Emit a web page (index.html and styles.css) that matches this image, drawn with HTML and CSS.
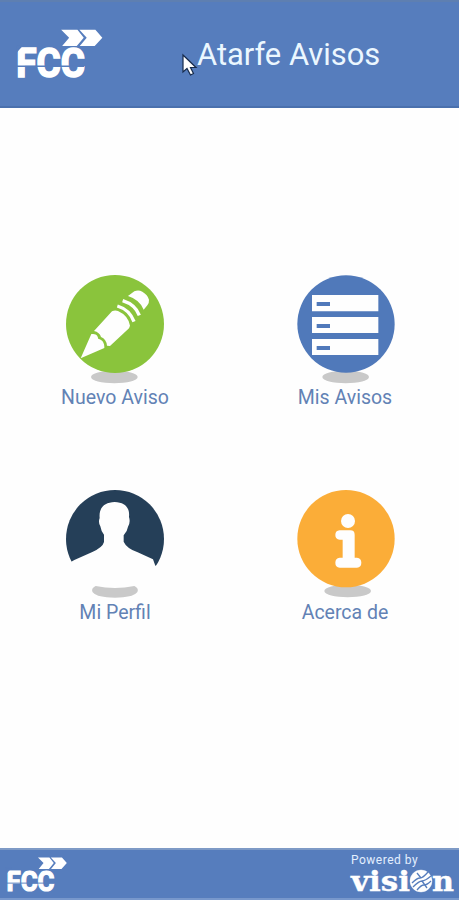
FILE: index.html
```html
<!DOCTYPE html>
<html lang="es">
<head>
    <meta charset="UTF-8">
    <meta name="viewport" content="width=device-width, initial-scale=1.0">
    <title>Atarfe Avisos</title>
    <link rel="stylesheet" href="styles.css">
</head>
<body>
    <div class="container">
        <header class="header">
            <svg class="header-logo" viewBox="50 84 262 156">
                <text class="logo-text" x="48" y="232" textLength="206" lengthAdjust="spacingAndGlyphs">FCC</text>
                <path class="logo-cut" d="M50 199H252M46 134V158L68 134Z"/>
                <path class="logo-arrow" d="M183 89H232L251 113L230 138H186L207 113ZM238 89H286L307 113L284 138H239L260 113Z"/>
            </svg>
            <h1>Atarfe Avisos</h1>
            <svg class="cursor" viewBox="0 0 15 22">
                <path d="M1 1V18L5 14.500L8.500 21L11.500 19.500L8.500 13.500H14Z"/>
            </svg>
        </header>

        <main class="menu">
            <a class="menu-item">
                <svg viewBox="0 0 390 345">
                    <ellipse class="shadow" cx="193" cy="351" rx="70" ry="19"/>
                    <circle class="green" cx="195" cy="192" r="147"/>
                    <path class="white" d="M92 295L124 222C139 222 143 226 145 237C157 239 164 249 163 264ZM132 213L186 154Q195 149 204 153Q235 167 240 197L237 205L180 258L171 257Q169 237 153 231Q149 217 132 213ZM234 108L253 94Q265 88 277 95Q293 104 297 119Q298 127 292 136L281 149Q269 119 234 108Z"/>
                    <path class="pencil-band" d="M202 138Q239 149 252 185M218 122Q256 134 268 166"/>
                </svg>
                <span>Nuevo Aviso</span>
            </a>
            <a class="menu-item">
                <svg viewBox="0 0 390 345">
                    <ellipse class="shadow" cx="197" cy="351" rx="70" ry="19"/>
                    <circle class="blue" cx="198" cy="192" r="146"/>
                    <path class="white" d="M96 105H295V154H96ZM96 171H295V219H96ZM96 237H295V285H96Z"/>
                    <path class="blue" d="M110 126H150V138H110ZM110 192H150V204H110ZM110 258H150V270H110Z"/>
                </svg>
                <span>Mis Avisos</span>
            </a>
            <a class="menu-item">
                <svg viewBox="0 0 390 345">
                    <circle class="navy" cx="195" cy="192" r="147"/>
                    <path class="white" d="M48 269L73 255L127 231Q158 217 162 201V179Q153 168 151 154Q144 142 149 129C146 98 163 82 194 81C225 82 240 98 237 126Q242 142 234 155Q232 169 221 181V200Q229 219 263 232L309 253L316 272L345 270V345H48Z"/>
                    <path class="shadow" d="M137 333Q195 345 253 333C274 343 268 368 195 368S116 343 137 333Z"/>
                </svg>
                <span>Mi Perfil</span>
            </a>
            <a class="menu-item">
                <svg viewBox="0 0 390 345">
                    <ellipse class="shadow" cx="203" cy="348" rx="70" ry="19"/>
                    <circle class="orange" cx="198" cy="191" r="146"/>
                    <circle class="white" cx="204" cy="138" r="21"/>
                    <path class="white" d="M179 166H211Q224 166 224 179V248H231Q244 249 244 263T231 278H179Q166 277 166 263T179 248H188V194H179Q166 193 166 180T179 166Z"/>
                </svg>
                <span>Acerca de</span>
            </a>
        </main>

        <footer class="footer">
            <svg class="footer-logo" viewBox="50 84 262 156">
                <text class="logo-text" x="48" y="232" textLength="206" lengthAdjust="spacingAndGlyphs">FCC</text>
                <path class="logo-cut" d="M50 199H252M46 134V158L68 134Z"/>
                <path class="logo-arrow" d="M183 89H232L251 113L230 138H186L207 113ZM238 89H286L307 113L284 138H239L260 113Z"/>
            </svg>
            <div class="powered">
                <span>Powered by</span>
                <svg class="vision" viewBox="0 0 104 26">
                    <text x="1" y="24" textLength="59" lengthAdjust="spacingAndGlyphs">visi</text>
                    <circle class="white" cx="71" cy="14" r="11"/>
                    <path class="ball-lines" d="M62 16Q67 11 70 11T78 5M63 20Q69 14 72 14T81 9M67 23Q71 18 74 18T81 14M67 6L71 11M72 14L77 21"/>
                    <text x="82" y="24" textLength="22" lengthAdjust="spacingAndGlyphs">n</text>
                </svg>
            </div>
        </footer>
    </div>
</body>
</html>
```

FILE: styles.css
```css
* {
    box-sizing: border-box;
}
body {
    margin: 0;
    background-color: #fefefe;
    font-family: Roboto, "Liberation Sans", sans-serif;
}
svg {
    overflow: visible;
}
.container {
    height: 900px;
    display: flex;
    flex-direction: column;
}
.header {
    position: relative;
    display: flex;
    align-items: flex-start;
    height: 108px;
    padding: 26px 0 0 17px;
    background-color: #567dbd;
    border-top: 2px solid #5e7fb1;
    border-bottom: 2px solid #4a70ad;
}
.header-logo {
    width: 87px;
    height: 52px;
    margin-right: 93px;
}
.header h1 {
    margin: 7px 0 0;
    font-size: 30.9px;
    line-height: 40px;
    font-weight: 400;
    color: #ebf7ff;
    white-space: nowrap;
}
.cursor {
    position: absolute;
    left: 182px;
    top: 52px;
    width: 15px;
    height: 22px;
    fill: #fff;
    stroke: #172b4b;
    stroke-width: 1.2;
}
.logo-text {
    font: bold 120px Roboto, sans-serif;
    fill: #fff;
    stroke: #fff;
    stroke-width: 5;
}
.logo-arrow {
    fill: #fff;
}
.logo-cut {
    fill: #567dbd;
    stroke: #567dbd;
    stroke-width: 4;
}
.menu {
    flex: 1;
    display: grid;
    grid-template-columns: 130px 130px;
    grid-auto-rows: 155px;
    gap: 60px 100px;
    align-content: start;
    padding: 152px 0 0 50px;
}
.menu-item {
    display: flex;
    flex-direction: column;
    align-items: center;
    font-size: 19.5px;
    color: #6282b5;
    white-space: nowrap;
}
.menu-item svg {
    width: 130px;
    height: 115px;
}
.menu-item span {
    margin-top: 11px;
    line-height: 24px;
}
.shadow {
    fill: #c9c9c9;
}
.green {
    fill: #8ac43c;
}
.blue {
    fill: #5079ba;
}
.navy {
    fill: #253f58;
}
.orange {
    fill: #fbad38;
}
.white {
    fill: #fefefe;
}
.pencil-band {
    fill: none;
    stroke: #fff;
    stroke-width: 10;
}
.footer {
    display: flex;
    justify-content: space-between;
    height: 52px;
    padding: 6px 5px 0 7px;
    background-color: #567dbd;
    border-top: 2px solid #7e9ac6;
    border-bottom: 2px solid #7898cc;
}
.footer-logo {
    width: 61px;
    height: 37px;
}
.powered {
    display: flex;
    flex-direction: column;
    width: 104px;
    margin-top: -3px;
    font-size: 12px;
    line-height: 14px;
    letter-spacing: 0.5px;
    color: #e3efff;
}
.powered span {
    padding-left: 1px;
}
.vision {
    width: 104px;
    height: 26px;
    font: bold 28px "DejaVu Serif", serif;
    letter-spacing: 0;
    fill: #fff;
    stroke: #fff;
    stroke-width: 0.4;
}
.ball-lines {
    fill: none;
    stroke: #567dbd;
    stroke-width: 1.3;
}
```
